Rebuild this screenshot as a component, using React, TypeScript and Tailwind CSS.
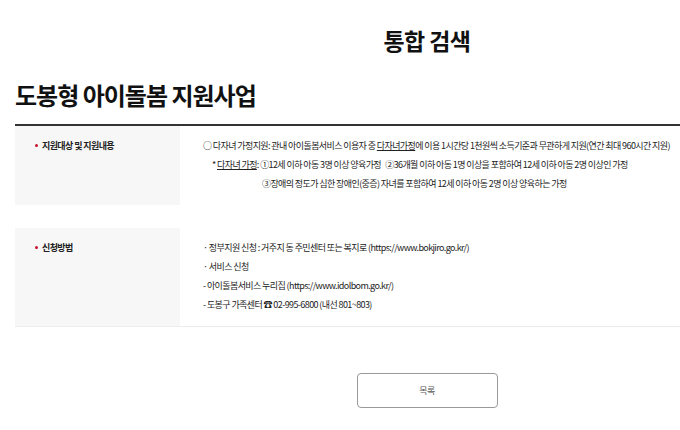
const FONT = "font-['Noto_Sans_CJK_KR','Noto_Sans',sans-serif]";

function Bullet() {
  return <span className="mr-[4px] inline-block h-[3px] w-[3px] translate-y-[-2px] rounded-full bg-[#c8102e]" />;
}

export default function App() {
  return (
    <div className={`min-h-screen overflow-hidden bg-white text-[#222] ${FONT}`}>
      <div className="w-[854px] px-[15px]">
        <h1 className="pt-[25px] text-center text-[23px] font-bold leading-[30px] tracking-[-0.6px] text-[#111]">
          통합 검색
        </h1>

        <h2 className="mt-[24px] text-[24px] font-bold leading-[32px] tracking-[-1px] text-[#111]">
          도봉형 아이돌봄 지원사업
        </h2>

        <div className="mt-[13px] border-t-2 border-[#333]">
          {/* row 1 */}
          <div className="flex">
            <div className="w-[165px] shrink-0 bg-[#f7f7f7] pl-[20px] pt-[10px] pb-[12px]">
              <div className="text-[9px] font-bold leading-[19px] tracking-[-0.6px] text-[#222]">
                <Bullet />
                지원대상 및 지원내용
              </div>
            </div>
            <div className="flex-1 pt-[10px] pb-[12px] text-[9px] leading-[19px] tracking-[-0.6px] text-[#222]">
              <div className="pl-[23px]">
                ○ 다자녀 가정지원: 관내 아이돌봄서비스 이용자 중 <span className="underline">다자녀가정</span>에 이용 1시간당 1천원씩 소득기준과 무관하게 지원(연간 최대 960시간 지원)
              </div>
              <div className="pl-[32px]">
                * <span className="underline">다자녀 가정</span>: ①12세 이하 아동 3명 이상 양육가정&nbsp;&nbsp; ②36개월 이하 아동 1명 이상을 포함하여 12세 이하 아동 2명 이상인 가정
              </div>
              <div className="pl-[82px]">
                ③장애의 정도가 심한 장애인(중증) 자녀를 포함하여 12세 이하 아동 2명 이상 양육하는 가정
              </div>
            </div>
          </div>

          {/* row 2 */}
          <div className="mt-[23px] flex border-b border-[#ececec]">
            <div className="w-[165px] shrink-0 bg-[#f7f7f7] pl-[20px] pt-[10px] pb-[12px]">
              <div className="text-[9px] font-bold leading-[19px] tracking-[-0.6px] text-[#222]">
                <Bullet />
                신청방법
              </div>
            </div>
            <div className="flex-1 pl-[23px] pt-[10px] pb-[12px] text-[9px] leading-[19px] tracking-[-0.6px] text-[#222]">
              <div>· 정부지원 신청 : 거주지 동 주민센터 또는 복지로 (https://www.bokjiro.go.kr/)</div>
              <div>· 서비스 신청</div>
              <div>- 아이돌봄서비스 누리집 (https://www.idolbom.go.kr/)</div>
              <div>- 도봉구 가족센터 ☎ 02-995-6800 (내선 801~803)</div>
            </div>
          </div>
        </div>

        <div className="mt-[46px] flex justify-center">
          <button className="h-[35px] w-[141px] rounded-[4px] border border-[#999] bg-white text-[9px] tracking-[-0.5px] text-[#555]">
            목록
          </button>
        </div>
      </div>
    </div>
  );
}
